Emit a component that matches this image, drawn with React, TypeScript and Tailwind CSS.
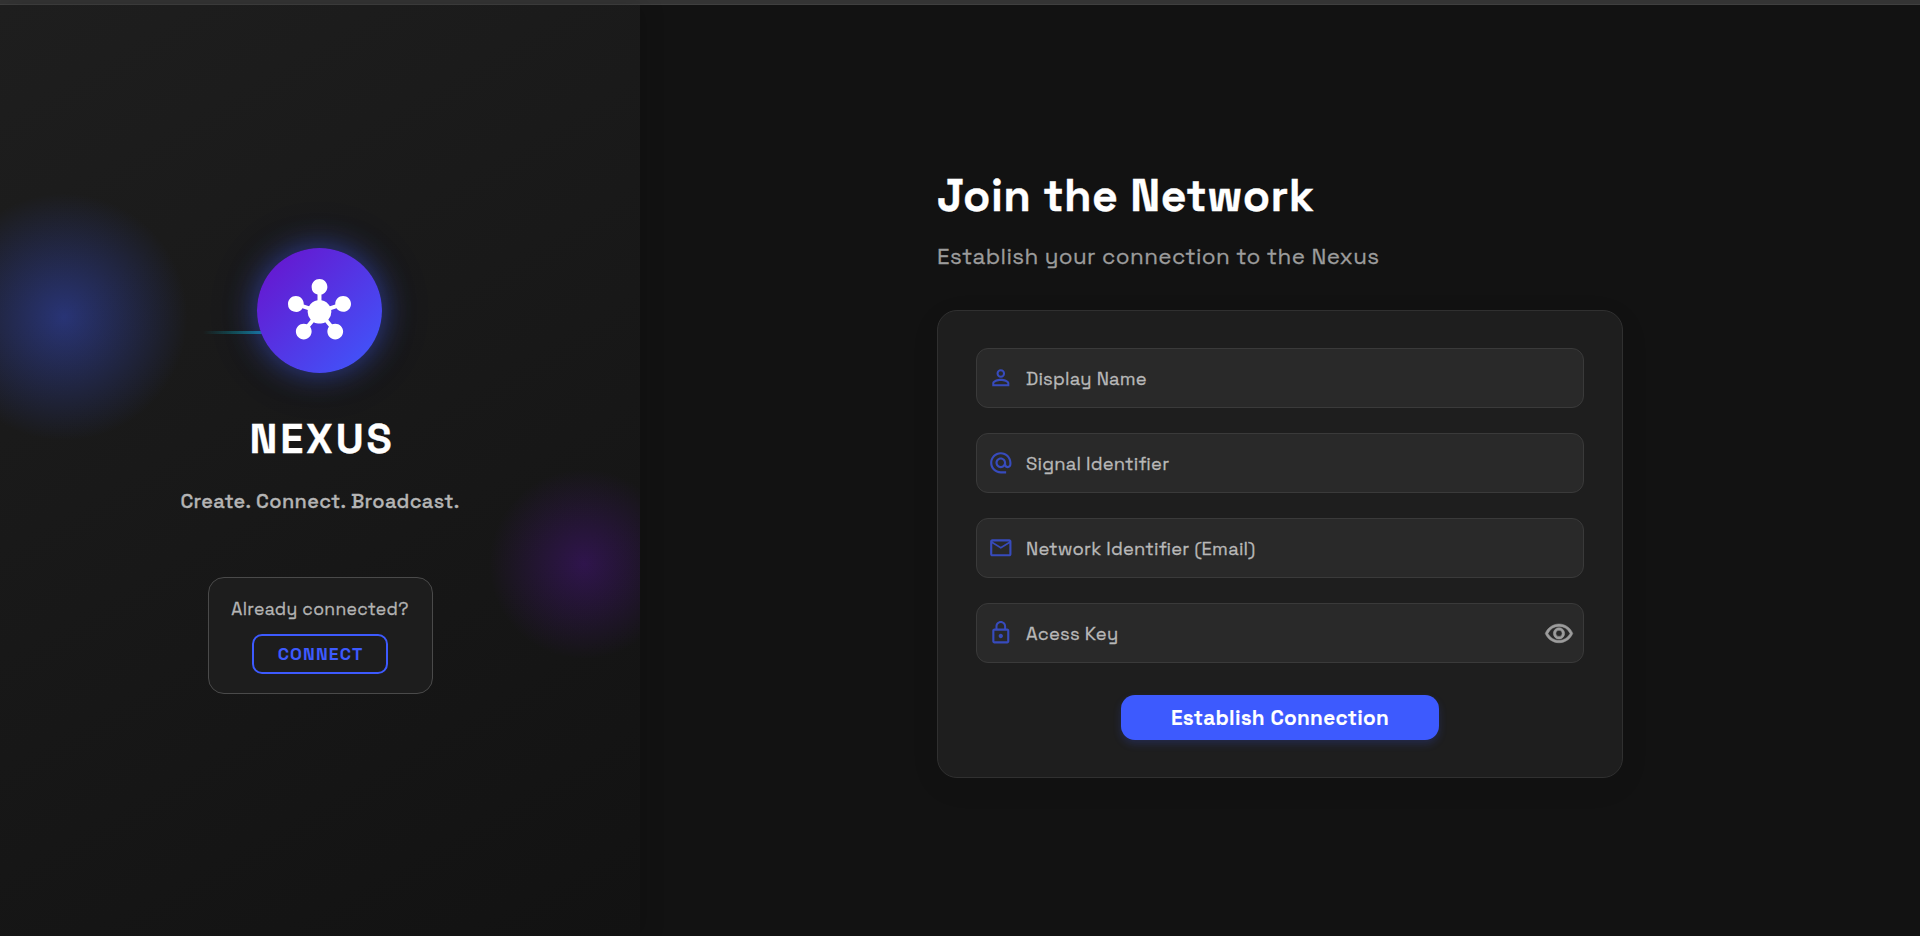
import type { IconType } from "react-icons";
import { MdAlternateEmail, MdHub, MdLockOutline, MdMailOutline, MdPersonOutline } from "react-icons/md";

const fields: { label: string; icon: IconType; secret?: boolean }[] = [
  { label: "Display Name", icon: MdPersonOutline },
  { label: "Signal Identifier", icon: MdAlternateEmail },
  { label: "Network Identifier (Email)", icon: MdMailOutline },
  { label: "Acess Key", icon: MdLockOutline, secret: true },
];

function EyeIcon() {
  return (
    <svg viewBox="0 0 24 24" className="size-[30px]" fill="currentColor" stroke="currentColor" strokeWidth="0.4">
      <path d="M12 6a9.77 9.77 0 0 1 8.82 5.5C19.17 14.87 15.79 17 12 17s-7.17-2.13-8.82-5.5A9.77 9.77 0 0 1 12 6m0-2C7 4 2.73 7.11 1 11.5 2.73 15.89 7 19 12 19s9.27-3.11 11-7.5C21.27 7.11 17 4 12 4zm0 5a2.5 2.5 0 0 1 0 5 2.5 2.5 0 0 1 0-5m0-2c-2.48 0-4.5 2.02-4.5 4.5S9.52 16 12 16s4.5-2.02 4.5-4.5S14.48 7 12 7z" />
    </svg>
  );
}

function Field({ label, icon: Icon, secret }: { label: string; icon: IconType; secret?: boolean }) {
  return (
    <div className="flex h-[60px] items-center rounded-xl border border-[#3a3a3a] bg-[#292929] pl-[11.4px] pr-[9px]">
      <Icon className="size-[25.6px] shrink-0 text-[#374bbd]" />
      <span className="ml-[12px] flex-1 pt-px text-[18.4px] tracking-[0.2px] text-[#b8b8b8]">{label}</span>
      {secret && (
        <button type="button" aria-label="Show key" className="pt-px text-[#9c9c9c]">
          <EyeIcon />
        </button>
      )}
    </div>
  );
}

function BrandPanel() {
  return (
    <aside className="relative z-10 flex w-[640px] shrink-0 flex-col items-center bg-[linear-gradient(150deg,#1e1e1e_0%,#121212_100%)] pt-[243px] shadow-[4px_0_20px_rgba(0,0,0,0.15)]">
      <div className="pointer-events-none absolute inset-0 overflow-hidden">
        <div className="absolute left-[-61px] top-[187px] size-[250px] rounded-full bg-[radial-gradient(circle,#3d5afe_0%,transparent_70%)] opacity-40" />
        <div className="absolute left-[488px] top-[463px] size-[192px] rounded-full bg-[radial-gradient(circle,#6a11cb_0%,transparent_70%)] opacity-30" />
        <div className="absolute left-[203px] top-[326px] h-[3px] w-[150px] bg-[linear-gradient(90deg,transparent,#00e5ff,transparent)] opacity-60" />
      </div>

      <div className="relative mr-[0.2px] flex size-[125px] items-center justify-center rounded-full bg-[linear-gradient(135deg,#6a11cb_0%,#3d5afe_100%)] shadow-[0_0_30px_rgba(61,90,254,0.5),0_0_60px_rgba(61,90,254,0.1)]">
        <MdHub className="size-[63px] text-white" />
      </div>
      <h1 className="mt-[41px] pl-[4px] text-[41.6px] font-bold leading-[50px] tracking-[2.8px] text-white">NEXUS</h1>
      <p className="mt-[22px] text-xl font-medium leading-[30px] tracking-[0.32px] text-[#b4b4b4]">
        Create. Connect. Broadcast.
      </p>

      <div className="relative mt-[61px] flex h-[117px] w-[225px] flex-col items-center rounded-2xl border border-[#4a4a4a] bg-[#1d1d1d] pt-[18px]">
        <p className="text-[17.6px] leading-[26px] tracking-[0.3px] text-[#b4b4b4]">Already connected?</p>
        <button
          type="button"
          className="mt-3 h-10 w-[136px] rounded-[10px] border-2 border-[#3d5afe] pl-px pt-px text-[17.6px] font-bold leading-none tracking-[1.1px] text-[#3d5afe] [-webkit-text-stroke:0px]"
        >
          CONNECT
        </button>
      </div>
    </aside>
  );
}

export default function App() {
  return (
    <div className="flex h-screen flex-col overflow-hidden bg-[#121212] font-['Space_Grotesk',sans-serif] [-webkit-text-stroke:0.3px_currentColor]">
      <header className="h-[5px] shrink-0 border-b border-[#3f3f3f] bg-[#343434]" />
      <div className="flex flex-1">
        <BrandPanel />
        <main className="flex flex-1 justify-center pt-[163px]">
          <div className="w-[686px]">
            <h2 className="text-[44.8px] font-bold leading-[55px] tracking-[0.45px] text-white">Join the Network</h2>
            <p className="mt-[19px] text-[22.4px] leading-[30px] tracking-[0.38px] text-[#9c9c9c]">
              Establish your connection to the Nexus
            </p>
            <form className="mt-[38px] flex h-[468px] flex-col gap-[25px] rounded-[20px] border border-[#303030] bg-[#1e1e1e] px-[38px] pt-[37px] shadow-[0_8px_32px_rgba(0,0,0,0.06)]">
              {fields.map((f) => (
                <Field key={f.label} {...f} />
              ))}
              <button
                type="button"
                className="mt-[7px] h-[45px] w-[318px] self-center rounded-[14px] bg-[#3d5afe] pt-0.5 text-[20.8px] font-bold leading-none tracking-[0.25px] text-white shadow-[0_4px_8px_rgba(61,90,254,0.2)] [-webkit-text-stroke:0.1px_currentColor]"
              >
                Establish Connection
              </button>
            </form>
          </div>
        </main>
      </div>
    </div>
  );
}
